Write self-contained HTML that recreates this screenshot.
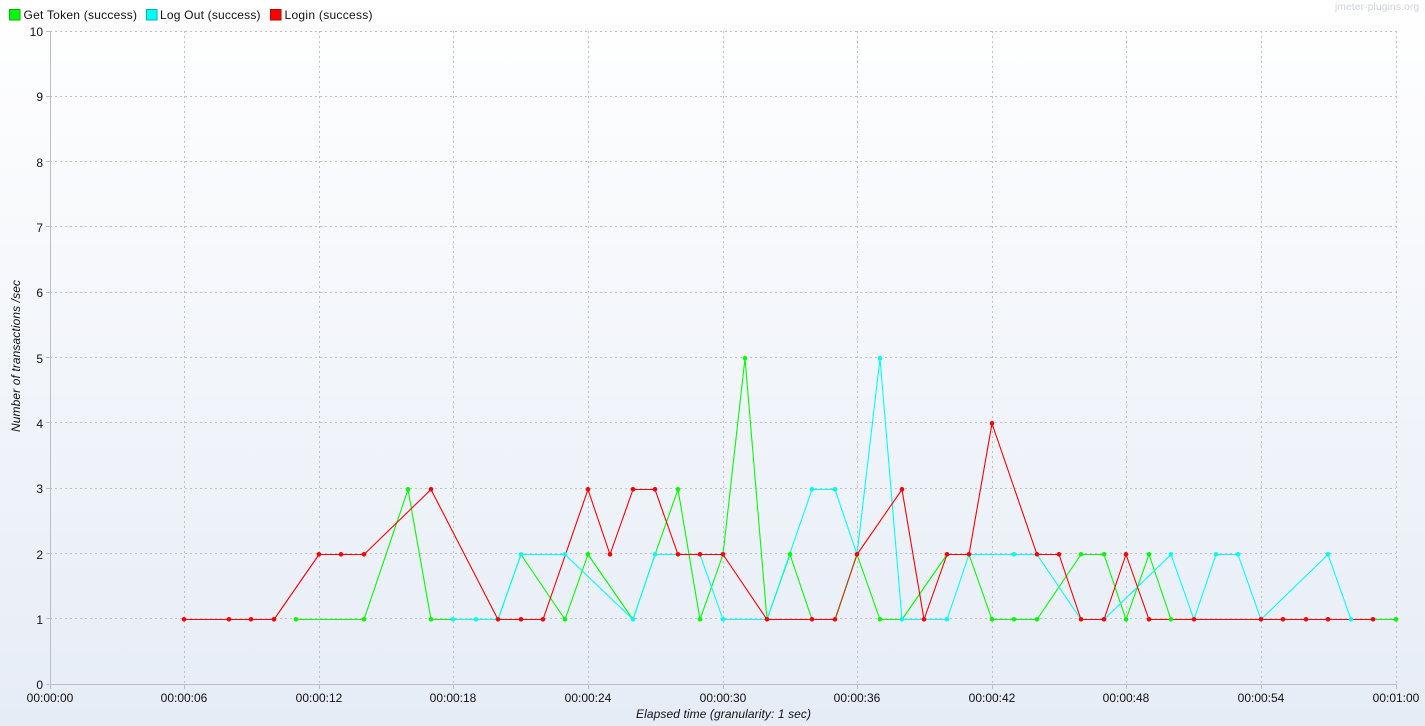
<!DOCTYPE html>
<html lang="en">
<head>
<meta charset="utf-8">
<title>Transactions per second</title>
<style>
html,body{margin:0;padding:0;width:1425px;height:726px;overflow:hidden;background:#fff}
svg{display:block}
text{font-family:"Liberation Sans",Arial,sans-serif;font-size:12px;fill:#111}
.g{stroke:#bcc1cb;stroke-width:1;stroke-dasharray:2 3;fill:none}
.a{stroke:#b8bfca;stroke-width:1;fill:none}
.l{fill:none;stroke-width:1.1;stroke-linejoin:round}
.m{fill:none;stroke-width:4.6;stroke-linecap:round}
</style>
</head>
<body>
<svg width="1425" height="726" viewBox="0 0 1425 726" xmlns="http://www.w3.org/2000/svg">
<defs>
<linearGradient id="bg" x1="0" y1="0" x2="0" y2="1">
<stop offset="0" stop-color="#ffffff"/>
<stop offset="1" stop-color="#e6ecf6"/>
</linearGradient>
</defs>
<rect width="1425" height="726" fill="url(#bg)"/>

<path class="g" d="M50 31.5H1396M50 96.5H1396M50 161.5H1396M50 226.5H1396M50 292.5H1396M50 357.5H1396M50 422.5H1396M50 488.5H1396M50 553.5H1396M50 618.5H1396"/>
<path class="g" d="M184.5 31V684M319.5 31V684M453.5 31V684M588.5 31V684M723.5 31V684M857.5 31V684M992.5 31V684M1126.5 31V684M1261.5 31V684M1396.5 31V684"/>

<path class="a" d="M50.5 31V684.5M50 684.5H1397"/>
<path class="a" d="M46 31.5H50M46 96.5H50M46 161.5H50M46 226.5H50M46 292.5H50M46 357.5H50M46 422.5H50M46 488.5H50M46 553.5H50M46 618.5H50M46 684.5H50"/>
<path class="a" d="M50.5 684V689M184.5 684V689M319.5 684V689M453.5 684V689M588.5 684V689M723.5 684V689M857.5 684V689M992.5 684V689M1126.5 684V689M1261.5 684V689M1396.5 684V689"/>

<polyline class="l" stroke="#00ff00" points="296,619.5 364,619.5 408,489.5 431,619.5 498,619.5 521,554.5 565,619.5 588,554.5 633,619.5 655,554.5 678,489.5 700,619.5 723,554.5 745,358.5 767,619.5 790,554.5 812,619.5 835,619.5 857,554.5 880,619.5 902,619.5 947,554.5 969,554.5 992,619.5 1014,619.5 1037,619.5 1081,554.5 1104,554.5 1126,619.5 1149,554.5 1171,619.5 1194,619.5 1396,619.5"/>
<polyline class="l" stroke="#00ffff" points="453,619.5 476,619.5 498,619.5 521,554.5 565,554.5 633,619.5 655,554.5 700,554.5 723,619.5 767,619.5 812,489.5 835,489.5 857,554.5 880,358.5 902,619.5 947,619.5 969,554.5 1014,554.5 1037,554.5 1081,619.5 1104,619.5 1171,554.5 1194,619.5 1216,554.5 1238,554.5 1261,619.5 1328,554.5 1351,619.5 1373,619.5"/>
<polyline class="l" stroke="#ff0000" points="184,619.5 229,619.5 251,619.5 274,619.5 319,554.5 341,554.5 364,554.5 431,489.5 498,619.5 521,619.5 543,619.5 588,489.5 610,554.5 633,489.5 655,489.5 678,554.5 700,554.5 723,554.5 767,619.5 812,619.5 835,619.5 857,554.5 902,489.5 924,619.5 947,554.5 969,554.5 992,423.5 1037,554.5 1059,554.5 1081,619.5 1104,619.5 1126,554.5 1149,619.5 1194,619.5 1261,619.5 1283,619.5 1306,619.5 1328,619.5 1373,619.5"/>
<path fill="none" stroke="#a85010" stroke-width="1" d="M836 617L856 557"/>

<path class="m" stroke="#00ff00" d="M296 619.3h0M364 619.3h0M408 489.3h0M431 619.3h0M565 619.3h0M588 554.3h0M678 489.3h0M700 619.3h0M745 358.3h0M790 554.3h0M880 619.3h0M992 619.3h0M1014 619.3h0M1037 619.3h0M1081 554.3h0M1104 554.3h0M1126 619.3h0M1149 554.3h0M1171 619.3h0M1396 619.3h0"/>
<path class="m" stroke="#00ffff" d="M453 619.3h0M476 619.3h0M521 554.3h0M565 554.3h0M633 619.3h0M655 554.3h0M723 619.3h0M812 489.3h0M835 489.3h0M880 358.3h0M902 619.3h0M947 619.3h0M1014 554.3h0M1171 554.3h0M1216 554.3h0M1238 554.3h0M1328 554.3h0M1351 619.3h0"/>
<path class="m" stroke="#ff0000" d="M184 619.3h0M229 619.3h0M251 619.3h0M274 619.3h0M319 554.3h0M341 554.3h0M364 554.3h0M431 489.3h0M498 619.3h0M521 619.3h0M543 619.3h0M588 489.3h0M610 554.3h0M633 489.3h0M655 489.3h0M678 554.3h0M700 554.3h0M723 554.3h0M767 619.3h0M812 619.3h0M835 619.3h0M857 554.3h0M902 489.3h0M924 619.3h0M947 554.3h0M969 554.3h0M992 423.3h0M1037 554.3h0M1059 554.3h0M1081 619.3h0M1104 619.3h0M1126 554.3h0M1149 619.3h0M1194 619.3h0M1261 619.3h0M1283 619.3h0M1306 619.3h0M1328 619.3h0M1373 619.3h0"/>

<rect x="9.5" y="9.5" width="10.5" height="10.5" fill="#00ff00" stroke="#00b400"/>
<rect x="146.5" y="9.5" width="10.5" height="10.5" fill="#00ffff" stroke="#00b4b4"/>
<rect x="270.5" y="9.5" width="10.5" height="10.5" fill="#ff0000" stroke="#b40000"/>
<text x="23.5" y="19" textLength="113.5">Get Token (success)</text>
<text x="160" y="19" textLength="100.5">Log Out (success)</text>
<text x="284.5" y="19" textLength="88">Login (success)</text>

<text x="1335" y="10" textLength="84" style="font-size:10px;fill:#ccd2dc">jmeter-plugins.org</text>

<g text-anchor="end">
<text x="43" y="36">10</text>
<text x="43" y="101">9</text>
<text x="43" y="167">8</text>
<text x="43" y="232">7</text>
<text x="43" y="297">6</text>
<text x="43" y="363">5</text>
<text x="43" y="428">4</text>
<text x="43" y="493">3</text>
<text x="43" y="559">2</text>
<text x="43" y="624">1</text>
<text x="43" y="689">0</text>
</g>
<g text-anchor="middle">
<text x="50" y="702">00:00:00</text>
<text x="184" y="702">00:00:06</text>
<text x="319" y="702">00:00:12</text>
<text x="453" y="702">00:00:18</text>
<text x="588" y="702">00:00:24</text>
<text x="723" y="702">00:00:30</text>
<text x="857" y="702">00:00:36</text>
<text x="992" y="702">00:00:42</text>
<text x="1126" y="702">00:00:48</text>
<text x="1261" y="702">00:00:54</text>
<text x="1396" y="702">00:01:00</text>
</g>
<text x="636" y="718" textLength="175" style="font-style:italic">Elapsed time (granularity: 1 sec)</text>
<text transform="translate(20 432) rotate(-90)" x="0" y="0" textLength="152" style="font-style:italic">Number of transactions /sec</text>
</svg>
</body>
</html>
